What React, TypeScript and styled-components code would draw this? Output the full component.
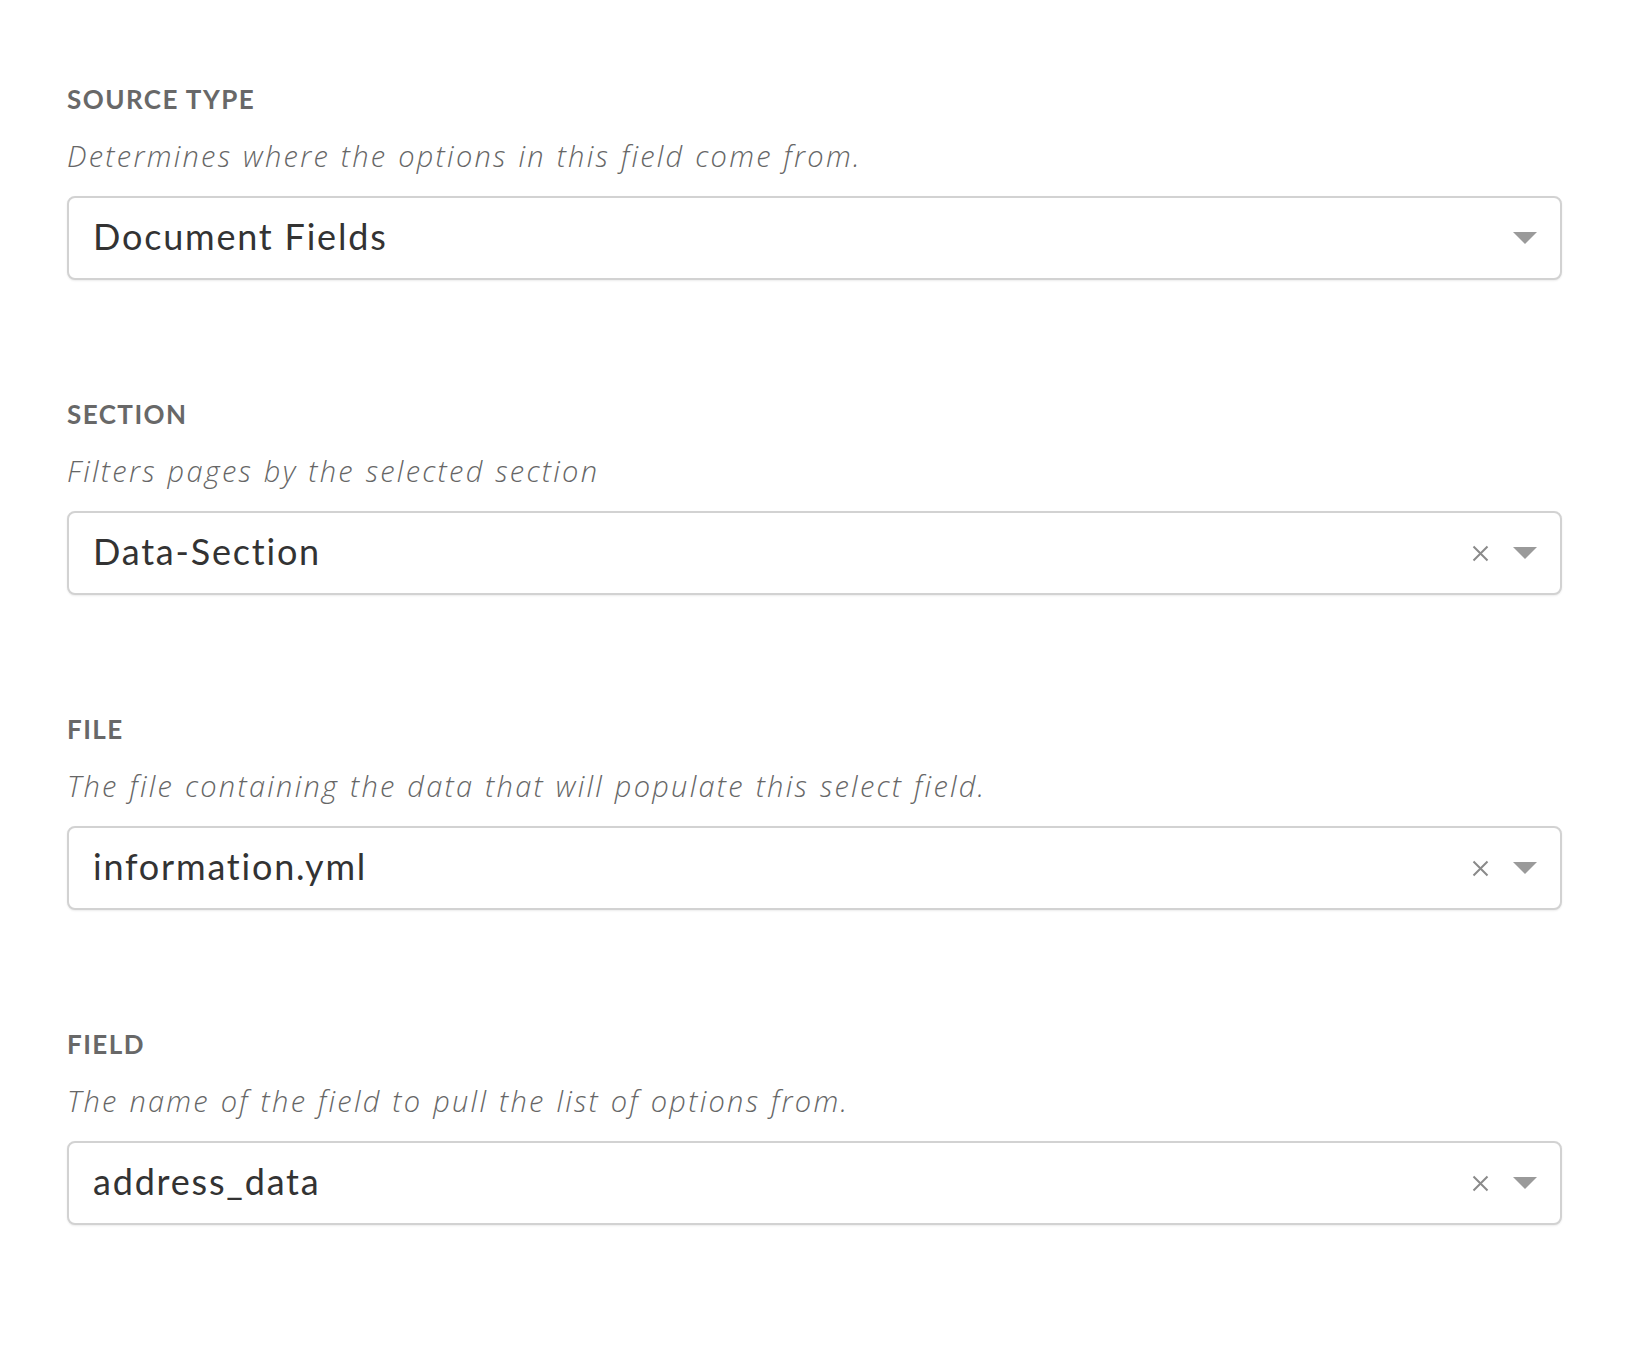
import React from "react";
import styled, { createGlobalStyle } from "styled-components";

const Global = createGlobalStyle`
  html, body { margin: 0; padding: 0; background: #ffffff; }
  body { font-family: Lato, "Noto Sans", "Liberation Sans", sans-serif; }
`;

const Page = styled.div`
  display: flex;
  flex-direction: column;
  gap: 118px;
  padding: 83px 66px 80px 67px;
`;

const Section = styled.section`
  display: flex;
  flex-direction: column;
`;

const Label = styled.div`
  font-size: 26px;
  line-height: 32px;
  font-weight: 700;
  letter-spacing: 1.45px;
  color: #686868;
  text-transform: uppercase;
  margin-bottom: 23px;
`;

const Description = styled.div`
  font-family: "Open Sans", Lato, sans-serif;
  font-size: 29px;
  line-height: 36px;
  font-style: italic;
  font-weight: 300;
  letter-spacing: 2.25px;
  word-spacing: 1px;
  color: #666666;
  margin-bottom: 22px;
`;

const SelectBox = styled.div`
  box-sizing: border-box;
  height: 84px;
  border: 2px solid #d2d2d2;
  border-radius: 8px;
  box-shadow: 0 1px 2px rgba(0, 0, 0, 0.08);
  display: flex;
  align-items: center;
  padding: 0 23px 4px 24px;
  background: #fff;
`;

const Value = styled.div`
  flex: 1;
  font-size: 36px;
  line-height: 36px;
  color: #333333;
  letter-spacing: 1.8px;
`;

const Controls = styled.div`
  display: flex;
  align-items: center;
  gap: 24px;
  padding-top: 4px;
`;

const IconSlot = styled.span`
  display: flex;
  align-items: center;
  justify-content: center;
`;

const ClearIcon = () => (
  <IconSlot>
    <svg width="17" height="17" viewBox="0 0 17 17">
      <path d="M1.5 1.5 L15.5 15.5 M15.5 1.5 L1.5 15.5" stroke="#8a8a8a" strokeWidth="2" strokeLinecap="butt" />
    </svg>
  </IconSlot>
);

const ArrowIcon = () => (
  <IconSlot>
    <svg width="24" height="12" viewBox="0 0 24 12">
      <path d="M0 0 H24 L12 12 Z" fill="#9a9a9a" />
    </svg>
  </IconSlot>
);

type FieldProps = {
  label: string;
  description: string;
  value: string;
  clearable?: boolean;
};

const Field = ({ label, description, value, clearable }: FieldProps) => (
  <Section>
    <Label>{label}</Label>
    <Description>{description}</Description>
    <SelectBox>
      <Value>{value}</Value>
      <Controls>
        {clearable && <ClearIcon />}
        <ArrowIcon />
      </Controls>
    </SelectBox>
  </Section>
);

const fields: FieldProps[] = [
  {
    label: "Source Type",
    description: "Determines where the options in this field come from.",
    value: "Document Fields",
  },
  {
    label: "Section",
    description: "Filters pages by the selected section",
    value: "Data-Section",
    clearable: true,
  },
  {
    label: "File",
    description: "The file containing the data that will populate this select field.",
    value: "information.yml",
    clearable: true,
  },
  {
    label: "Field",
    description: "The name of the field to pull the list of options from.",
    value: "address_data",
    clearable: true,
  },
];

export default function App() {
  return (
    <>
      <Global />
      <Page>
        {fields.map((f) => (
          <Field key={f.label} {...f} />
        ))}
      </Page>
    </>
  );
}
